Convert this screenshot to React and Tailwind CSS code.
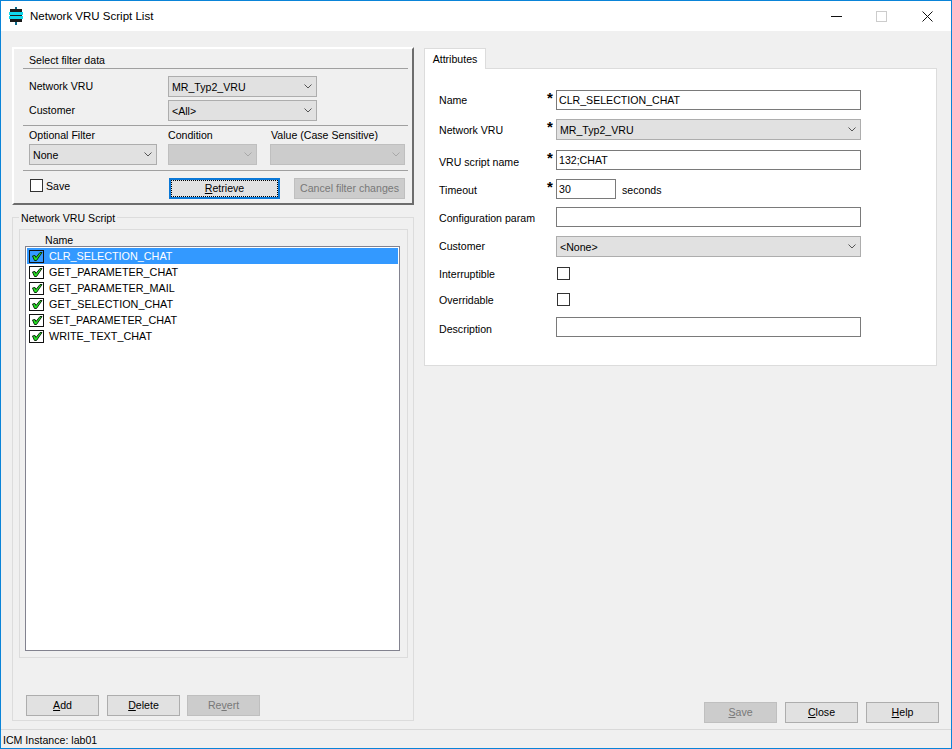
import React from 'react';

const SCRIPTS = [
  'CLR_SELECTION_CHAT',
  'GET_PARAMETER_CHAT',
  'GET_PARAMETER_MAIL',
  'GET_SELECTION_CHAT',
  'SET_PARAMETER_CHAT',
  'WRITE_TEXT_CHAT',
];

function AppIcon() {
  return (
    <svg width="16" height="18" viewBox="0 0 16 18" className="shrink-0">
      <rect x="7" y="0" width="2" height="18" fill="#0a6a8a" />
      <rect x="2" y="2" width="12" height="3" fill="#1c1c1c" />
      <rect x="1" y="5" width="14" height="3" fill="#10d8ec" />
      <rect x="2" y="8" width="12" height="1" fill="#1c1c1c" />
      <rect x="1" y="9" width="14" height="3" fill="#10d8ec" />
      <rect x="2" y="12" width="12" height="3" fill="#1c1c1c" />
    </svg>
  );
}

function Chevron({ disabled }) {
  return (
    <svg width="8" height="5" viewBox="0 0 8 5" className="shrink-0">
      <path d="M0.5 0.5 4 4 7.5 0.5" fill="none" stroke={disabled ? '#a8a8a8' : '#555'} />
    </svg>
  );
}

function Select({ value, className = '', disabled }) {
  return (
    <div
      className={`h-[21px] flex items-center justify-between pl-[3px] pr-[4px] border ${
        disabled ? 'bg-[#cccccc] border-[#bfbfbf]' : 'bg-[#e1e1e1] border-[#adadad]'
      } ${className}`}
    >
      <span className="pt-[1px]">{value}</span>
      <Chevron disabled={disabled} />
    </div>
  );
}

function Button({ children, disabled, className = '' }) {
  return (
    <div
      className={`w-[73px] h-[21px] flex items-center justify-center border ${
        disabled ? 'bg-[#cccccc] border-[#bfbfbf] text-[#787878]' : 'bg-[#e1e1e1] border-[#adadad]'
      } ${className}`}
    >
      <span>{children}</span>
    </div>
  );
}

function CheckIcon() {
  return (
    <svg width="15" height="13" viewBox="0 0 15 13" className="shrink-0">
      <rect x="0.5" y="0.5" width="14" height="12" fill="none" stroke="#111" />
      <path d="M3.5 6 6 5.5 7 7.5 11 2.5 13 2.5 7.5 10.5 5.5 10.5Z" fill="#22e622" stroke="#0c2c0c" strokeWidth="1" />
    </svg>
  );
}

function Box() {
  return <div className="w-[13px] h-[13px] bg-white border border-[#333]" />;
}

function Field({ label, required, className = '', labelClass = '', children }) {
  return (
    <div className={`flex items-center ${className}`}>
      <span className={`w-[108px] shrink-0 ${labelClass}`}>{label}</span>
      <span className="w-[9px] shrink-0 text-[15px] leading-none font-bold self-start h-[12px]">{required ? '*' : ''}</span>
      {children}
    </div>
  );
}

function TextBox({ value, className = 'w-[305px]' }) {
  return (
    <div className={`h-[20px] flex items-center pl-[2px] bg-white border border-[#7a7a7a] ${className}`}>{value}</div>
  );
}

export default function App() {
  return (
    <div className="w-[952px] h-[749px] flex flex-col overflow-hidden bg-[#f0f0f0] border border-[#0a84d8] text-[10.6px] leading-none text-black font-['Liberation_Sans',sans-serif]">
      {/* Title bar */}
      <div className="h-[30px] shrink-0 flex items-center bg-white pl-[7px]">
        <AppIcon />
        <span className="ml-[6px] pt-[1px] text-[11.5px]">Network VRU Script List</span>
        <div className="ml-auto flex items-center">
          <svg width="11" height="11" viewBox="0 0 11 11">
            <path d="M0 5.5h11" stroke="#111" />
          </svg>
          <svg width="11" height="11" viewBox="0 0 11 11" className="ml-[34px]">
            <rect x="0.5" y="0.5" width="10" height="10" fill="none" stroke="#ccc" />
          </svg>
          <svg width="11" height="11" viewBox="0 0 11 11" className="ml-[35px] mr-[18px]">
            <path d="M0.5 0.5 10.5 10.5M10.5 0.5 0.5 10.5" stroke="#111" />
          </svg>
        </div>
      </div>

      {/* Main */}
      <div className="h-[698px] shrink-0 flex pl-[11px] pt-[16px] pb-[6px]">
        <div className="w-[402px] shrink-0 flex flex-col">
          {/* Filter panel */}
          <div className="h-[158px] border-l-2 border-t-2 border-r-2 border-b-2 border-l-white border-t-white border-r-[#6d6d6d] border-b-[#6d6d6d] pl-[9px] pr-[4px]">
            <div className="h-[20px] flex items-center pl-[6px] pt-[3px] border-b border-[#a0a0a0]">Select filter data</div>
            <div className="pl-[6px] pt-[7px] pb-[4px] border-b border-[#a0a0a0]">
              <div className="flex items-center">
                <span className="w-[139px]">Network VRU</span>
                <Select value="MR_Typ2_VRU" className="w-[149px]" />
              </div>
              <div className="flex items-center mt-[3px]">
                <span className="w-[139px]">Customer</span>
                <Select value="<All>" className="w-[149px]" />
              </div>
            </div>
            <div className="pl-[6px] pt-[2px] pb-[5px] border-b border-[#a0a0a0]">
              <div className="flex h-[16px] items-center pb-[2px]">
                <span className="w-[139px]">Optional Filter</span>
                <span className="w-[103px]">Condition</span>
                <span>Value (Case Sensitive)</span>
              </div>
              <div className="flex">
                <Select value="None" className="w-[128px]" />
                <Select value="" disabled className="w-[89px] ml-[11px]" />
                <Select value="" disabled className="w-[135px] ml-[13px]" />
              </div>
            </div>
            <div className="flex items-start pl-[7px] pt-[7px]">
              <div className="w-[13px] h-[13px] mt-[1px] bg-white border border-[#333]" />
              <span className="ml-[3px] mt-[3px] w-[123px]">Save</span>
              <div className="w-[111px] h-[21px] flex items-center justify-center bg-[#e1e1e1] border-2 border-[#0a78d7]">
                <div className="w-full h-full flex items-center justify-center border border-dotted border-black">
                  <span>
                    <span className="underline">R</span>etrieve
                  </span>
                </div>
              </div>
              <div className="w-[111px] h-[21px] ml-[14px] flex items-center justify-center bg-[#cccccc] border border-[#bfbfbf] text-[#787878]">
                Cancel filter changes
              </div>
            </div>
          </div>

          {/* Script group */}
          <div className="relative h-[504px] mt-[12px] border border-[#dcdcdc] pl-[6px] pt-[11px]">
            <span className="absolute left-[6px] -top-[5px] px-[2px] bg-[#f0f0f0]">Network VRU Script</span>
            <div className="w-[389px] h-[429px] border border-[#dcdcdc] pl-[5px]">
              <div className="h-[16px] flex items-center pl-[20px] pt-[4px]">Name</div>
              <div className="w-[375px] h-[405px] bg-white border border-[#82828f] p-px">
                {SCRIPTS.map((name, i) => (
                  <div
                    key={name}
                    className={`h-[16px] flex items-center pl-[2px] ${i === 0 ? 'bg-[#3399ff] text-white' : ''}`}
                  >
                    <CheckIcon />
                    <span className="ml-[5px] pt-[1px] text-[10.8px]">{name}</span>
                  </div>
                ))}
              </div>
            </div>
            <div className="flex gap-[8px] ml-[7px] mt-[37px]">
              <Button>
                <span className="underline">A</span>dd
              </Button>
              <Button>
                <span className="underline">D</span>elete
              </Button>
              <Button disabled className="-ml-px">
                Re<span className="underline">v</span>ert
              </Button>
            </div>
          </div>
        </div>

        {/* Attributes */}
        <div className="w-[515px] shrink-0 ml-[10px] flex flex-col">
          <div className="w-[62px] h-[21px] mt-[1px] -mb-px relative flex items-center justify-center bg-white border border-b-0 border-[#dcdcdc]">
            Attributes
          </div>
          <div className="w-[513px] h-[298px] bg-white border border-[#dcdcdc] pl-[14px] pt-[21px]">
            <Field label="Name" required>
              <TextBox value="CLR_SELECTION_CHAT" />
            </Field>
            <Field label="Network VRU" required className="mt-[9px]" labelClass="pt-[1px]">
              <Select value="MR_Typ2_VRU" className="w-[305px]" />
            </Field>
            <Field label="VRU script name" required className="mt-[10px]" labelClass="pt-[4px]">
              <TextBox value="132;CHAT" />
            </Field>
            <Field label="Timeout" required className="mt-[9px]" labelClass="pt-[2px]">
              <TextBox value="30" className="w-[60px]" />
              <span className="ml-[6px] pt-[2px]">seconds</span>
            </Field>
            <Field label="Configuration param" className="mt-[8px]" labelClass="pt-[2px]">
              <TextBox value="" />
            </Field>
            <Field label="Customer" className="mt-[9px]">
              <Select value="<None>" className="w-[305px]" />
            </Field>
            <Field label="Interruptible" className="mt-[10px]" labelClass="pt-[2px]">
              <div className="ml-[1px]">
                <Box />
              </div>
            </Field>
            <Field label="Overridable" className="mt-[13px]" labelClass="pt-[2px]">
              <div className="ml-[1px]">
                <Box />
              </div>
            </Field>
            <Field label="Description" className="mt-[11px]" labelClass="pt-[4px]">
              <TextBox value="" />
            </Field>
          </div>
          <div className="mt-auto flex justify-end gap-[8px]">
            <Button disabled>
              <span className="underline">S</span>ave
            </Button>
            <Button>
              <span className="underline">C</span>lose
            </Button>
            <Button>
              <span className="underline">H</span>elp
            </Button>
          </div>
        </div>
      </div>

      {/* Status bar */}
      <div className="h-[19px] shrink-0 flex items-center pl-[2px] pt-[3px] border-t border-[#d9d9d9]">ICM Instance: lab01</div>
    </div>
  );
}
